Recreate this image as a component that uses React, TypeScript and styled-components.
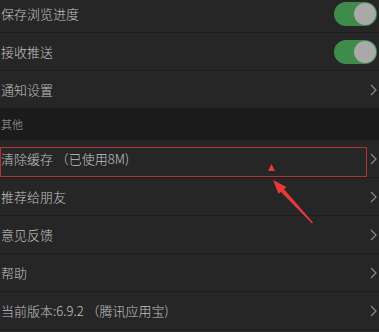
import React from "react";
import styled, { createGlobalStyle } from "styled-components";

const GlobalStyle = createGlobalStyle`
  html, body {
    margin: 0;
    padding: 0;
    background: #262626;
    overflow: hidden;
  }
  body {
    font-family: "Noto Sans CJK SC", "Noto Sans", sans-serif;
  }
`;

type Item = {
  label: string;
  kind: "toggle" | "arrow";
};

const topItems: Item[] = [
  { label: "保存浏览进度", kind: "toggle" },
  { label: "接收推送", kind: "toggle" },
  { label: "通知设置", kind: "arrow" },
];

const otherItems: Item[] = [
  { label: "清除缓存 （已使用8M)", kind: "arrow" },
  { label: "推荐给朋友", kind: "arrow" },
  { label: "意见反馈", kind: "arrow" },
  { label: "帮助", kind: "arrow" },
  { label: "当前版本:6.9.2 （腾讯应用宝)", kind: "arrow" },
];

const App = () => {
  return (
    <>
      <GlobalStyle />
      <Page>
        {topItems.map((item) => (
          <Row key={item.label}>
            <Label>{item.label}</Label>
            {item.kind === "toggle" ? <Toggle /> : <Chevron />}
          </Row>
        ))}
        <SectionHeader>其他</SectionHeader>
        {otherItems.map((item) => (
          <Row key={item.label}>
            <Label>{item.label}</Label>
            <Chevron />
          </Row>
        ))}
        <Highlight />
        <Pointer width="60" height="70" viewBox="0 0 60 70">
          <polygon points="9.5,2 13,9 6,9" fill="#e8383a" />
          <polygon points="11,18 24.5,25 16.5,32" fill="#e8383a" />
          <polygon points="18.5,29.5 21.5,26.5 51,60.5 50,61.5" fill="#e8383a" />
        </Pointer>
      </Page>
    </>
  );
};

export default App;

const Toggle = () => (
  <Switch>
    <Knob />
  </Switch>
);

const Chevron = () => (
  <ChevronIcon width="7" height="12" viewBox="0 0 7 12">
    <polyline points="1,1 6,6 1,11" fill="none" stroke="#8a8a8a" strokeWidth="1.2" />
  </ChevronIcon>
);

const Page = styled.div`
  position: relative;
  margin-top: -5px;
  width: 379px;
`;

const Row = styled.div`
  display: flex;
  align-items: center;
  justify-content: space-between;
  height: 37px;
  border-bottom: 1px solid #1e1e1e;
  background: #262626;
  padding: 0 2px 0 1px;
`;

const Label = styled.span`
  font-size: 13px;
  color: #c2c2c2;
  font-weight: 300;
`;

const SectionHeader = styled.div`
  display: flex;
  align-items: center;
  height: 32px;
  margin-top: -1px;
  padding-left: 1px;
  background: #1b1b1b;
  font-size: 11px;
  color: #aaaaaa;
  font-weight: 300;
`;

const Switch = styled.div`
  display: flex;
  align-items: center;
  justify-content: flex-end;
  width: 43px;
  height: 24px;
  border-radius: 12px;
  background: #3f8b4b;
  padding: 1px;
  box-sizing: border-box;
`;

const Knob = styled.div`
  width: 22px;
  height: 22px;
  border-radius: 50%;
  background: #a9a9a9;
`;

const ChevronIcon = styled.svg`
  flex-shrink: 0;
`;

const Highlight = styled.div`
  position: absolute;
  left: 0;
  top: 152px;
  width: 367px;
  height: 30px;
  border: 1px solid #b23236;
  box-sizing: border-box;
  pointer-events: none;
`;

const Pointer = styled.svg`
  position: absolute;
  left: 262px;
  top: 167px;
  pointer-events: none;
`;
